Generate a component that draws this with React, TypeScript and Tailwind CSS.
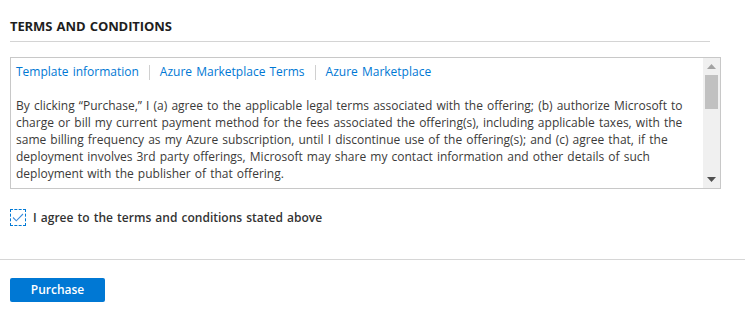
const links = ["Template information", "Azure Marketplace Terms", "Azure Marketplace"];

const terms =
  "By clicking \u201cPurchase,\u201d I (a) agree to the applicable legal terms associated with the offering; (b) authorize Microsoft to charge or bill my current payment method for the fees associated the offering(s), including applicable taxes, with the same billing frequency as my Azure subscription, until I discontinue use of the offering(s); and (c) agree that, if the deployment involves 3rd party offerings, Microsoft may share my contact information and other details of such deployment with the publisher of that offering.";

const ScrollBar = () => (
  <div className="w-[17px] h-full bg-[#f0f0f0] flex flex-col items-center">
    <div className="h-[17px] flex items-center justify-center">
      <svg width="9" height="5" viewBox="0 0 9 5">
        <path d="M0 5 L4.5 0 L9 5 Z" fill="#a3a3a3" />
      </svg>
    </div>
    <div className="w-[13px] h-[34px] bg-[#c1c1c1]" />
    <div className="flex-1" />
    <div className="h-[17px] flex items-center justify-center">
      <svg width="9" height="5" viewBox="0 0 9 5">
        <path d="M0 0 L9 0 L4.5 5 Z" fill="#505050" />
      </svg>
    </div>
  </div>
);

export default function App() {
  return (
    <div className="w-[745px] h-[313px] bg-white text-[#323130] font-['Open_Sans',sans-serif] [word-spacing:1px] overflow-hidden">
      <div className="px-[10px] pt-[18px]">
        <h2 className="text-[13px] leading-[16px] font-bold text-[#1e1e1e] tracking-[-0.1px]">TERMS AND CONDITIONS</h2>
        <div className="w-[700px] mt-[7px] border-b border-[#d4d4d4]" />

        <div className="mt-[15px] w-[711px] h-[132px] border border-[#c8c8c8] flex">
          <div className="flex-1 pl-[5px] pr-[4px] pt-[5px] overflow-hidden">
            <div className="flex items-center text-[12px] leading-[18px] text-[#0078d4]">
              {links.map((l, i) => (
                <div key={l} className="flex items-center">
                  {i > 0 && <span className="mx-[10px] w-px h-[15px] bg-[#d0d0d0]" />}
                  <a href="#">{l}</a>
                </div>
              ))}
            </div>
            <p className="mt-[16px] text-[12px] leading-[17px] text-[#3b3a39]">{terms}</p>
          </div>
          <ScrollBar />
        </div>

        <label className="mt-[19px] h-[18px] flex items-center gap-[7px]">
          <span className="w-[16px] h-[17px] border border-dashed border-[#0078d4] flex items-center justify-center">
            <svg width="12" height="9" viewBox="0 0 12 9">
              <path d="M1 4.5 L4.3 7.8 L11 1" fill="none" stroke="#3f8ddb" strokeWidth="1.1" />
            </svg>
          </span>
          <span className="pt-[2px] text-[12px] leading-[16px] font-semibold text-[#333333]">I agree to the terms and conditions stated above</span>
        </label>
      </div>

      <div className="mt-[33px] border-b border-[#d6d6d6]" />

      <div className="px-[10px] pt-[16px]">
        <button className="w-[95px] h-[24px] rounded-[2px] bg-[#0078d4] text-white text-[12px] font-semibold leading-[24px]">
          Purchase
        </button>
      </div>
    </div>
  );
}
